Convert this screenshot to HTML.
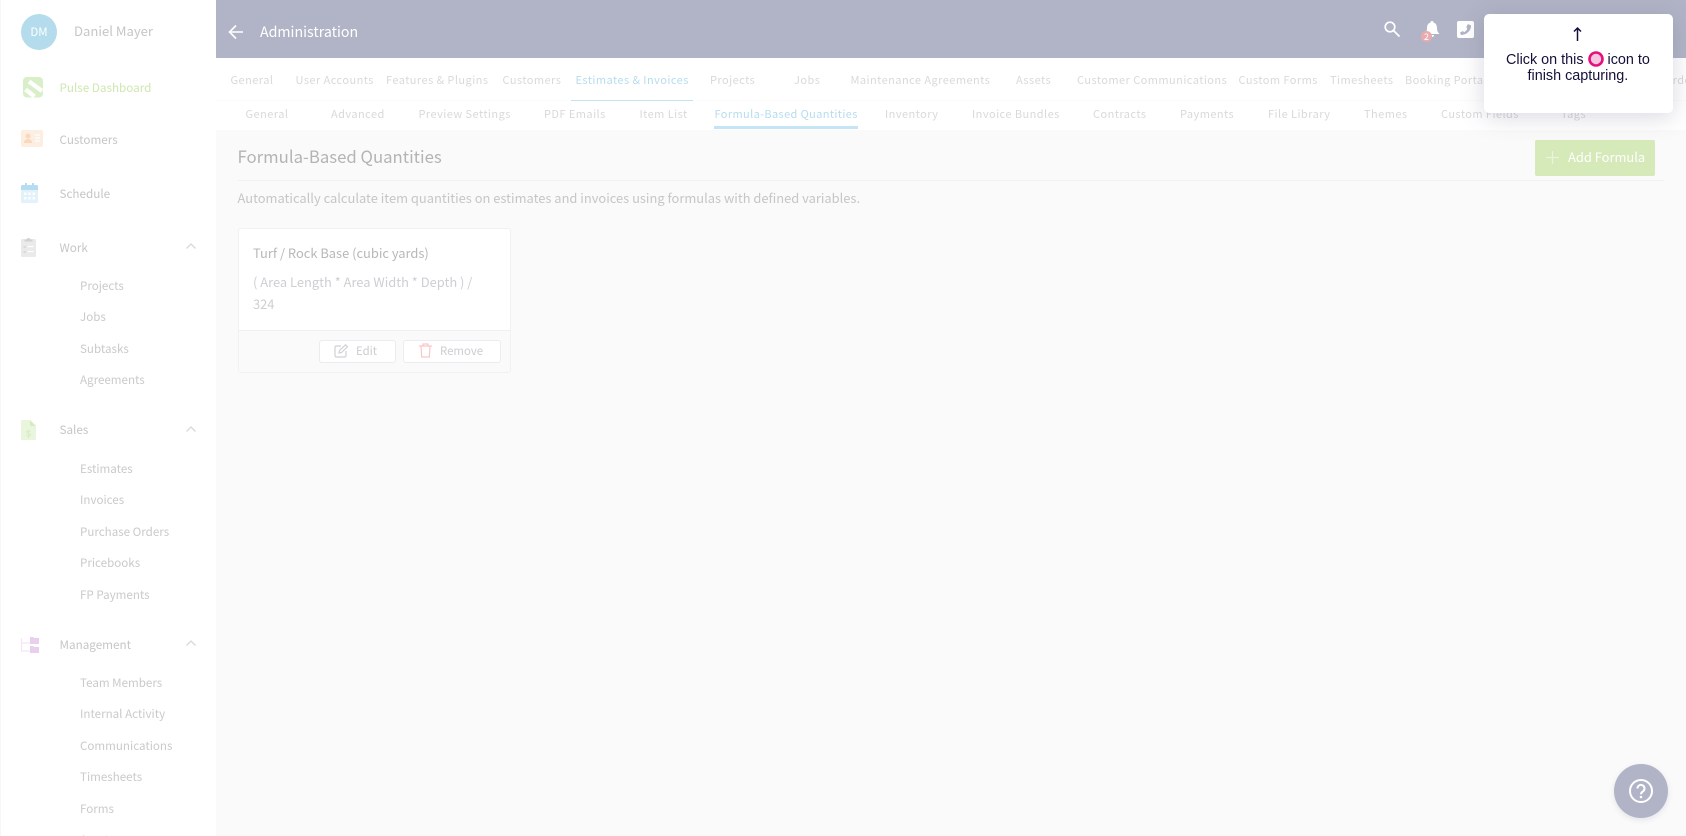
<!DOCTYPE html>
<html><head><meta charset="utf-8"><title>Administration</title>
<style>
html,body{margin:0;padding:0;width:1686px;height:836px;overflow:hidden;background:#fafafa}
body{position:relative;font-family:"Noto Sans CJK JP","Liberation Sans",sans-serif;}
.a{position:absolute}
.t{position:absolute;white-space:nowrap;line-height:20px;height:20px}
.tab{font-size:11px;letter-spacing:.45px;color:#d9d9d9}
.tab.on{color:#b6dcee}
.m{font-size:11.7px;color:#c6c6c6}
.s{font-size:11.6px;color:#cacaca;left:80px}
svg{position:absolute;overflow:visible}
</style></head><body>
<!-- sidebar -->
<div class="a" style="left:0;top:0;width:216px;height:836px;background:#fff"></div>
<div class="a" style="left:0;top:0;width:1px;height:836px;background:#f7f7f7"></div>
<div class="a" style="left:21px;top:14px;width:36px;height:36px;border-radius:50%;background:#b4dcec"></div>
<div class="t" style="left:21px;width:36px;text-align:center;top:22px;color:#fff;font-size:11.5px">DM</div>
<div class="t" style="left:74px;top:21px;font-size:13.100px;color:#c6c6c6">Daniel Mayer</div>

<svg style="left:22.500px;top:76.500px" width="20" height="21" viewBox="0 0 20 21"><rect width="20" height="20.500" rx="4" fill="#d8efc8"/><path d="M6 4.500l13 9.500M2.500 12.500l9 7" stroke="#fff" stroke-width="4.300" fill="none"/></svg>
<div class="t m" style="left:59.500px;top:78px;color:#cfe7b0">Pulse Dashboard</div>

<svg style="left:21px;top:130px" width="22" height="17" viewBox="0 0 22 17"><rect width="22" height="17" rx="2" fill="#fdeee2"/><circle cx="7" cy="6" r="2.500" fill="#fbd7bb"/><path d="M3 13c0-3 2-4 4-4s4 1 4 4z" fill="#fbd7bb"/><path d="M14 5h5M14 8h5M14 11h5" stroke="#fff" stroke-width="1.200"/></svg>
<div class="t m" style="left:59.500px;top:130px">Customers</div>

<svg style="left:21px;top:183px" width="17" height="20" viewBox="0 0 17 20"><rect y="2" width="17" height="18" rx="1.500" fill="#e3f1fa"/><path d="M0 3.500a1.500 1.500 0 0 1 1.500-1.500h14a1.500 1.500 0 0 1 1.500 1.500V7H0z" fill="#b6dcf2"/><rect x="4" width="2" height="4" fill="#b6dcf2"/><rect x="11" width="2" height="4" fill="#b6dcf2"/><g fill="#fff"><rect x="3" y="9.500" width="2.500" height="2.500"/><rect x="7.200" y="9.500" width="2.500" height="2.500"/><rect x="11.500" y="9.500" width="2.500" height="2.500"/><rect x="3" y="14" width="2.500" height="2.500"/><rect x="7.200" y="14" width="2.500" height="2.500"/><rect x="11.500" y="14" width="2.500" height="2.500"/></g></svg>
<div class="t m" style="left:59.500px;top:184px">Schedule</div>

<svg style="left:21px;top:237px" width="15" height="20" viewBox="0 0 15 20"><rect y="2" width="15" height="18" rx="1.500" fill="#eaeaea"/><path d="M4 4V3h2a1.500 1.500 0 0 1 3 0h2v1z" fill="#d2d2d2" stroke="#d2d2d2"/><path d="M6.500 9.500h6M6.500 14.500h6" stroke="#fff" stroke-width="1.300"/><path d="M2.500 9.500l1 1 1.500-1.500M2.500 14.500l1 1 1.500-1.500" stroke="#d2d2d2" fill="none"/></svg>
<div class="t m" style="left:59.500px;top:238px">Work</div>
<svg style="left:186px;top:243px" width="10" height="7" viewBox="0 0 10 7"><path d="M.5 5.500L5 1l4.500 4.500" stroke="#d8d8d8" stroke-width="1.300" fill="none"/></svg>
<div class="t s" style="top:275.500px">Projects</div>
<div class="t s" style="top:306.500px">Jobs</div>
<div class="t s" style="top:339px">Subtasks</div>
<div class="t s" style="top:370px">Agreements</div>

<svg style="left:21px;top:420px" width="15" height="20" viewBox="0 0 15 20"><path d="M1.500 0H9l6 6v12.500a1.500 1.500 0 0 1-1.500 1.500h-12A1.500 1.500 0 0 1 0 18.500v-17A1.500 1.500 0 0 1 1.500 0z" fill="#eaf5dd"/><path d="M9 0l6 6H9z" fill="#d6ecc0"/><path d="M9.500 11.500c-1-1-4-1-4 .5s4 1 4 2.800-3 1.500-4 .5M7.500 10v8" stroke="#d6ecc0" stroke-width=".9" fill="none"/></svg>
<div class="t m" style="left:59.500px;top:420px">Sales</div>
<svg style="left:186px;top:426px" width="10" height="7" viewBox="0 0 10 7"><path d="M.5 5.500L5 1l4.500 4.500" stroke="#d8d8d8" stroke-width="1.300" fill="none"/></svg>
<div class="t s" style="top:459px">Estimates</div>
<div class="t s" style="top:490px">Invoices</div>
<div class="t s" style="top:521.500px">Purchase Orders</div>
<div class="t s" style="top:552.500px">Pricebooks</div>
<div class="t s" style="top:585px">FP Payments</div>

<svg style="left:21px;top:637px" width="18" height="16" viewBox="0 0 18 16"><path d="M.5 1v13H9M.5 6H9" stroke="#f3e6f5" stroke-width="1.200" fill="none"/><path d="M9 0h3l1 1h5v6H9zM9 9h3l1 1h5v6H9z" fill="#e8cfee"/></svg>
<div class="t m" style="left:59.500px;top:635px">Management</div>
<svg style="left:186px;top:640px" width="10" height="7" viewBox="0 0 10 7"><path d="M.5 5.500L5 1l4.500 4.500" stroke="#d8d8d8" stroke-width="1.300" fill="none"/></svg>
<div class="t s" style="top:673px">Team Members</div>
<div class="t s" style="top:704px">Internal Activity</div>
<div class="t s" style="top:736px">Communications</div>
<div class="t s" style="top:767px">Timesheets</div>
<div class="t s" style="top:799px">Forms</div>
<div class="t s" style="top:830px">Assets</div>

<!-- header -->
<div class="a" style="left:216px;top:0;width:1470px;height:58px;background:#b1b4c6"></div>
<svg style="left:228px;top:24px" width="16" height="16" viewBox="0 0 16 16"><path d="M15 8H2M8 1.500L1.500 8 8 14.500" stroke="#fff" stroke-width="1.600" fill="none"/></svg>
<div class="t" style="left:260px;top:21.500px;color:#fff;font-size:14.200px">Administration</div>
<svg style="left:1384px;top:21px" width="16" height="16" viewBox="0 0 16 16"><circle cx="6" cy="6" r="4.800" stroke="#fff" stroke-width="1.700" fill="none"/><path d="M9.500 9.500l6 6" stroke="#fff" stroke-width="1.800"/></svg>
<svg style="left:1424px;top:20px" width="16" height="18" viewBox="0 0 16 18"><path d="M8 1a1.500 1.500 0 0 1 1.500 1.500C12 3.300 13 5.500 13 8c0 3 1 4.500 2.500 6h-15C2 12.500 3 11 3 8c0-2.500 1-4.700 3.500-5.500A1.500 1.500 0 0 1 8 1z" fill="#fff"/><path d="M6 15h4a2 2 0 0 1-4 0z" fill="#fff"/></svg>
<div class="a" style="left:1421px;top:31px;width:11px;height:11px;border-radius:50%;background:#eaabae;color:#fff;font-size:9px;line-height:11px;text-align:center">2</div>
<svg style="left:1457px;top:21px" width="17" height="17" viewBox="0 0 17 17"><rect width="17" height="17" rx="2" fill="#fff"/><path d="M11 3l3 1.500c.3 5-4.500 9.500-10 9.500l-1-2.500 3-1.500 1 1.200c1.500-.8 2.700-2 3.300-3.500L9.300 6z" fill="#b1b4c6"/></svg>

<!-- tabs -->
<div class="a" style="left:216px;top:58px;width:1470px;height:72px;background:#fff;overflow:hidden"></div>
<div class="a" style="left:216px;top:100px;width:1470px;height:1px;background:#fbfbfb"></div>
<div class="a" style="left:571px;top:100px;width:122px;height:1px;background:#c4e3f3"></div>
<div class="a" style="left:714px;top:126px;width:144px;height:3px;background:#c4e5f5"></div>
<div class="t tab" style="left:230.500px;top:70px">General</div>
<div class="t tab" style="left:295.500px;top:70px">User Accounts</div>
<div class="t tab" style="left:386px;top:70px">Features &amp; Plugins</div>
<div class="t tab" style="left:502.500px;top:70px">Customers</div>
<div class="t tab on" style="left:575.500px;top:70px">Estimates &amp; Invoices</div>
<div class="t tab" style="left:710px;top:70px">Projects</div>
<div class="t tab" style="left:794px;top:70px">Jobs</div>
<div class="t tab" style="left:850.500px;top:70px">Maintenance Agreements</div>
<div class="t tab" style="left:1016px;top:70px">Assets</div>
<div class="t tab" style="left:1077px;top:70px">Customer Communications</div>
<div class="t tab" style="left:1238.500px;top:70px">Custom Forms</div>
<div class="t tab" style="left:1330px;top:70px">Timesheets</div>
<div class="t tab" style="left:1405px;top:70px">Booking Portal</div>
<div class="t tab" style="left:1664px;top:70px">Orders</div>
<div class="t tab" style="left:245.500px;top:104px">General</div>
<div class="t tab" style="left:331px;top:104px">Advanced</div>
<div class="t tab" style="left:418.500px;top:104px">Preview Settings</div>
<div class="t tab" style="left:544px;top:104px">PDF Emails</div>
<div class="t tab" style="left:639.500px;top:104px">Item List</div>
<div class="t tab on" style="left:714.500px;top:104px;letter-spacing:.38px">Formula-Based Quantities</div>
<div class="t tab" style="left:885px;top:104px">Inventory</div>
<div class="t tab" style="left:972px;top:104px">Invoice Bundles</div>
<div class="t tab" style="left:1093px;top:104px">Contracts</div>
<div class="t tab" style="left:1180px;top:104px">Payments</div>
<div class="t tab" style="left:1268px;top:104px">File Library</div>
<div class="t tab" style="left:1364px;top:104px">Themes</div>
<div class="t tab" style="left:1441px;top:104px">Custom Fields</div>
<div class="t tab" style="left:1561px;top:104px">Tags</div>

<!-- content -->
<div class="t" style="left:237.500px;top:146px;font-size:16.750px;color:#b4b4b4">Formula-Based Quantities</div>
<div class="a" style="left:238px;top:180px;width:1426px;height:1px;background:#f1f1f1"></div>
<div class="t" style="left:237.500px;top:188px;font-size:12.900px;color:#c6c6c6">Automatically calculate item quantities on estimates and invoices using formulas with defined variables.</div>
<div class="a" style="left:1535px;top:140px;width:120px;height:36px;border-radius:2px;background:#d6e9b9"></div>
<svg style="left:1546px;top:151px" width="13" height="13" viewBox="0 0 13 13"><path d="M6.500 0v13M0 6.500h13" stroke="#e9f4da" stroke-width="1.300"/></svg>
<div class="t" style="left:1568px;top:147px;font-size:12.900px;color:#fff">Add Formula</div>

<div class="a" style="left:238px;top:228px;width:273px;height:145px;box-sizing:border-box;border:1px solid #f1f1f3;border-radius:3px;background:#fff;overflow:hidden">
<div class="a" style="left:0;top:101px;width:100%;height:43px;background:#fafafa;border-top:1px solid #f0f0f3"></div></div>
<div class="t" style="left:253px;top:243px;font-size:12.900px;color:#b8b8b8">Turf / Rock Base (cubic yards)</div>
<div class="t" style="left:253px;top:272px;font-size:12.900px;color:#cfcfd3">( Area Length * Area Width * Depth ) /</div>
<div class="t" style="left:253px;top:294px;font-size:12.900px;color:#cfcfd3">324</div>
<div class="a" style="left:319px;top:340px;width:77px;height:23px;box-sizing:border-box;border:1px solid #ebebf0;border-radius:3px;background:#fff"></div>
<div class="a" style="left:403px;top:340px;width:98px;height:23px;box-sizing:border-box;border:1px solid #ebebf0;border-radius:3px;background:#fff"></div>
<svg style="left:334px;top:344px" width="14" height="14" viewBox="0 0 14 14"><path d="M7 2H2.500A1.500 1.500 0 0 0 1 3.500v8A1.500 1.500 0 0 0 2.500 13h8a1.500 1.500 0 0 0 1.500-1.500V7" stroke="#d0d0d4" stroke-width="1.200" fill="none"/><path d="M5 9l.5-2.500L11.500 .8l2 2L7.500 8.500z" stroke="#d0d0d4" stroke-width="1.200" fill="none"/></svg>
<div class="t" style="left:356px;top:341px;font-size:11.400px;color:#cdcdd1">Edit</div>
<svg style="left:419px;top:343px" width="13" height="15" viewBox="0 0 13 15"><path d="M0 3h13M4 3V1h5v2M2 3l.7 11h7.600L11 3" stroke="#f9c6c8" stroke-width="1.200" fill="none"/></svg>
<div class="t" style="left:440px;top:341px;font-size:11.400px;color:#cdcdd1">Remove</div>

<!-- tooltip -->
<div class="a" style="left:1484px;top:14px;width:189px;height:99px;border-radius:5px;background:#fff;box-shadow:0 4px 24px rgba(80,84,120,.22)"></div>
<svg style="left:1573px;top:27px" width="9" height="14" viewBox="0 0 9 14"><path d="M4.500 14V1M1 4.500L4.500 1 8 4.500" stroke="#14103a" stroke-width="1.500" fill="none"/></svg>
<div class="t" style="left:1506px;top:50px;font-family:'Liberation Sans',sans-serif;font-size:14.400px;color:#14103a">Click on this</div>
<div class="t" style="left:1607.500px;top:50px;font-family:'Liberation Sans',sans-serif;font-size:14.400px;color:#14103a">icon to</div>
<div class="t" style="left:1527.500px;top:66px;font-family:'Liberation Sans',sans-serif;font-size:14.400px;color:#14103a">finish capturing.</div>
<svg style="left:1588px;top:51px" width="16" height="16" viewBox="0 0 16 16"><circle cx="8" cy="8" r="6.500" fill="#f5c6e2" stroke="#e5127d" stroke-width="2.600"/></svg>

<!-- help -->
<div class="a" style="left:1614px;top:764px;width:54px;height:54px;border-radius:50%;background:#b1b4c6;box-shadow:0 2px 6px rgba(177,180,198,.3)"></div>
<svg style="left:1629px;top:779px" width="24" height="24" viewBox="0 0 24 24"><circle cx="12" cy="12" r="11" stroke="#fff" stroke-width="2" fill="none"/><path d="M8.500 9.500a3.500 3.500 0 1 1 5.500 2.800c-1.300.9-2 1.500-2 3" stroke="#fff" stroke-width="2" fill="none"/><circle cx="12" cy="18" r="1.300" fill="#fff"/></svg>
</body></html>
